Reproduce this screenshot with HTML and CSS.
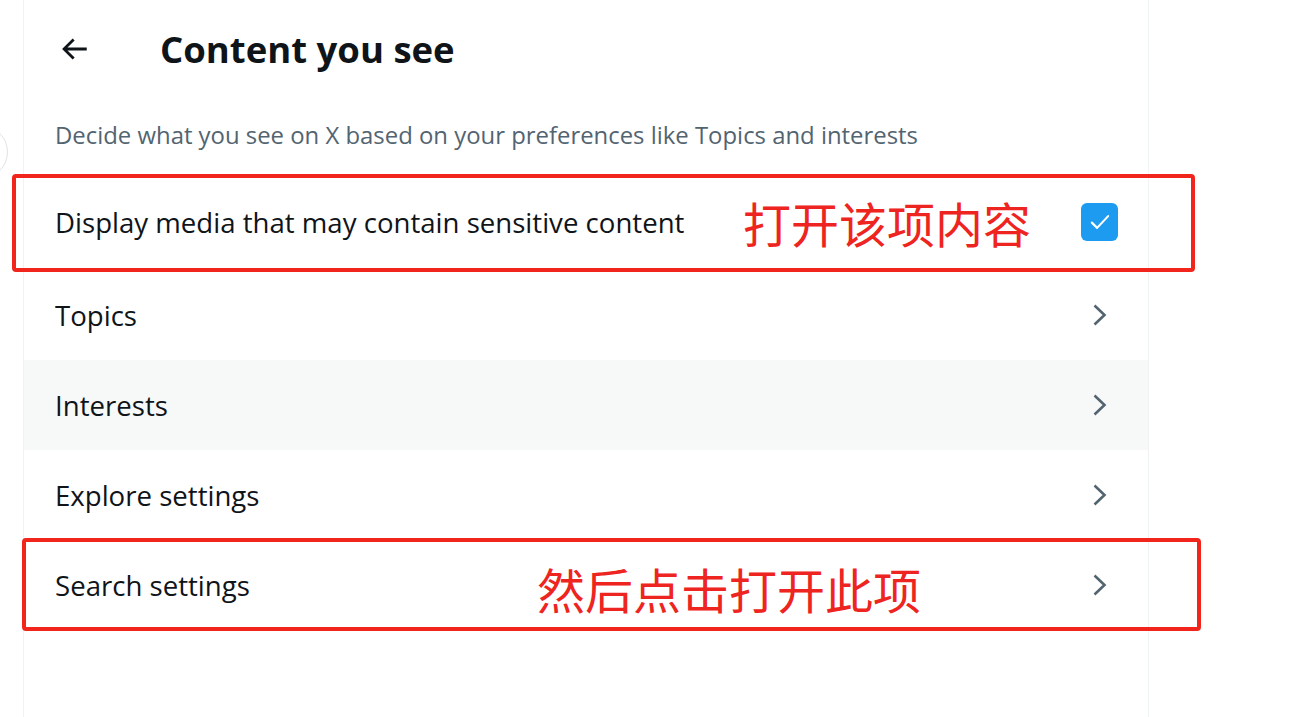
FILE: index.html
```html
<!DOCTYPE html>
<html lang="en">
<head>
<meta charset="utf-8">
<title>Content you see</title>
<link rel="stylesheet" href="styles.css">
</head>
<body>
<div class="side-circle"></div>
<main class="column">
  <header class="header">
    <button class="back" aria-label="Back">
      <svg viewBox="0 0 24 24" width="34" height="34"><path d="M7.414 13l5.043 5.04-1.414 1.42L3.586 12l7.457-7.46 1.414 1.42L7.414 11H21v2H7.414z" fill="#0f1419"/></svg>
    </button>
    <h1 class="title">Content you see</h1>
  </header>
  <p class="subtitle">Decide what you see on X based on your preferences like Topics and interests</p>
  <ul class="list">
    <li class="row first">
      <span class="label">Display media that may contain sensitive content</span>
      <span class="checkbox">
        <svg viewBox="0 0 24 24" width="30" height="30"><path d="M5.5 12.5l4.2 4.2 8.8-9.4" fill="none" stroke="#fff" stroke-width="1.7" stroke-linecap="round" stroke-linejoin="round"/></svg>
      </span>
    </li>
    <li class="row"><span class="label">Topics</span><span class="chev"><svg viewBox="0 0 16 24" width="16" height="24"><path d="M2.5 2.5l10 9.5-10 9.5" fill="none" stroke="#536471" stroke-width="2.6"/></svg></span></li>
    <li class="row hover"><span class="label">Interests</span><span class="chev"><svg viewBox="0 0 16 24" width="16" height="24"><path d="M2.5 2.5l10 9.5-10 9.5" fill="none" stroke="#536471" stroke-width="2.6"/></svg></span></li>
    <li class="row"><span class="label">Explore settings</span><span class="chev"><svg viewBox="0 0 16 24" width="16" height="24"><path d="M2.5 2.5l10 9.5-10 9.5" fill="none" stroke="#536471" stroke-width="2.6"/></svg></span></li>
    <li class="row"><span class="label">Search settings</span><span class="chev"><svg viewBox="0 0 16 24" width="16" height="24"><path d="M2.5 2.5l10 9.5-10 9.5" fill="none" stroke="#536471" stroke-width="2.6"/></svg></span></li>
  </ul>
</main>
<div class="mark mark-1"></div>
<div class="note note-1">打开该项内容</div>
<div class="mark mark-2"></div>
<div class="note note-2">然后点击打开此项</div>
</body>
</html>
```
FILE: styles.css
```css
html, body {
  margin: 0;
  padding: 0;
  background: #fff;
}
body {
  font-family: "Open Sans", "Noto Sans", sans-serif;
  color: #0f1419;
  position: relative;
  width: 1290px;
  height: 717px;
  overflow: hidden;
}
.side-circle {
  position: absolute;
  left: -46px;
  top: 125px;
  width: 52px;
  height: 52px;
  border: 1px solid #dfe3e6;
  border-radius: 50%;
}
.column {
  margin-left: 23px;
  width: 1124px;
  min-height: 717px;
  border-left: 1px solid #eff3f4;
  border-right: 1px solid #eff3f4;
  box-sizing: content-box;
}
.header {
  height: 98px;
  display: flex;
  align-items: center;
}
.back {
  margin-left: 33px;
  width: 34px;
  height: 34px;
  padding: 0;
  border: 0;
  background: none;
  display: flex;
  align-items: center;
  justify-content: center;
}
.title {
  margin: 0 0 0 69px;
  font-size: 36.5px;
  font-weight: 700;
  line-height: 40px;
}
.subtitle {
  margin: 0;
  padding: 20px 31px 28px;
  font-size: 23.9px;
  line-height: 34px;
  color: #536471;
}
.list {
  list-style: none;
  margin: 0;
  padding: 0;
}
.row {
  height: 90px;
  display: flex;
  align-items: center;
  justify-content: space-between;
  padding: 0 30px 0 31px;
  font-size: 27.6px;
}
.row.first {
  box-sizing: border-box;
  padding-bottom: 6px;
}
.row.hover {
  background: #f7f9f9;
}
.label {
  line-height: 34px;
}
.checkbox {
  width: 37px;
  height: 38px;
  border-radius: 6px;
  background: #1d9bf0;
  display: flex;
  align-items: center;
  justify-content: center;
}
.chev {
  width: 37px;
  display: flex;
  justify-content: center;
}
.mark {
  position: absolute;
  border: 4px solid #f2251d;
  border-radius: 4px;
  box-sizing: border-box;
}
.mark-1 {
  left: 12px;
  top: 174px;
  width: 1183px;
  height: 98px;
}
.mark-2 {
  left: 22px;
  top: 538px;
  width: 1179px;
  height: 93px;
}
.note {
  position: absolute;
  font-family: "Noto Sans CJK SC", sans-serif;
  font-size: 48px;
  line-height: 56px;
  color: #ee2420;
}
.note-1 {
  left: 743px;
  top: 194px;
}
.note-2 {
  left: 537px;
  top: 560px;
}
```
